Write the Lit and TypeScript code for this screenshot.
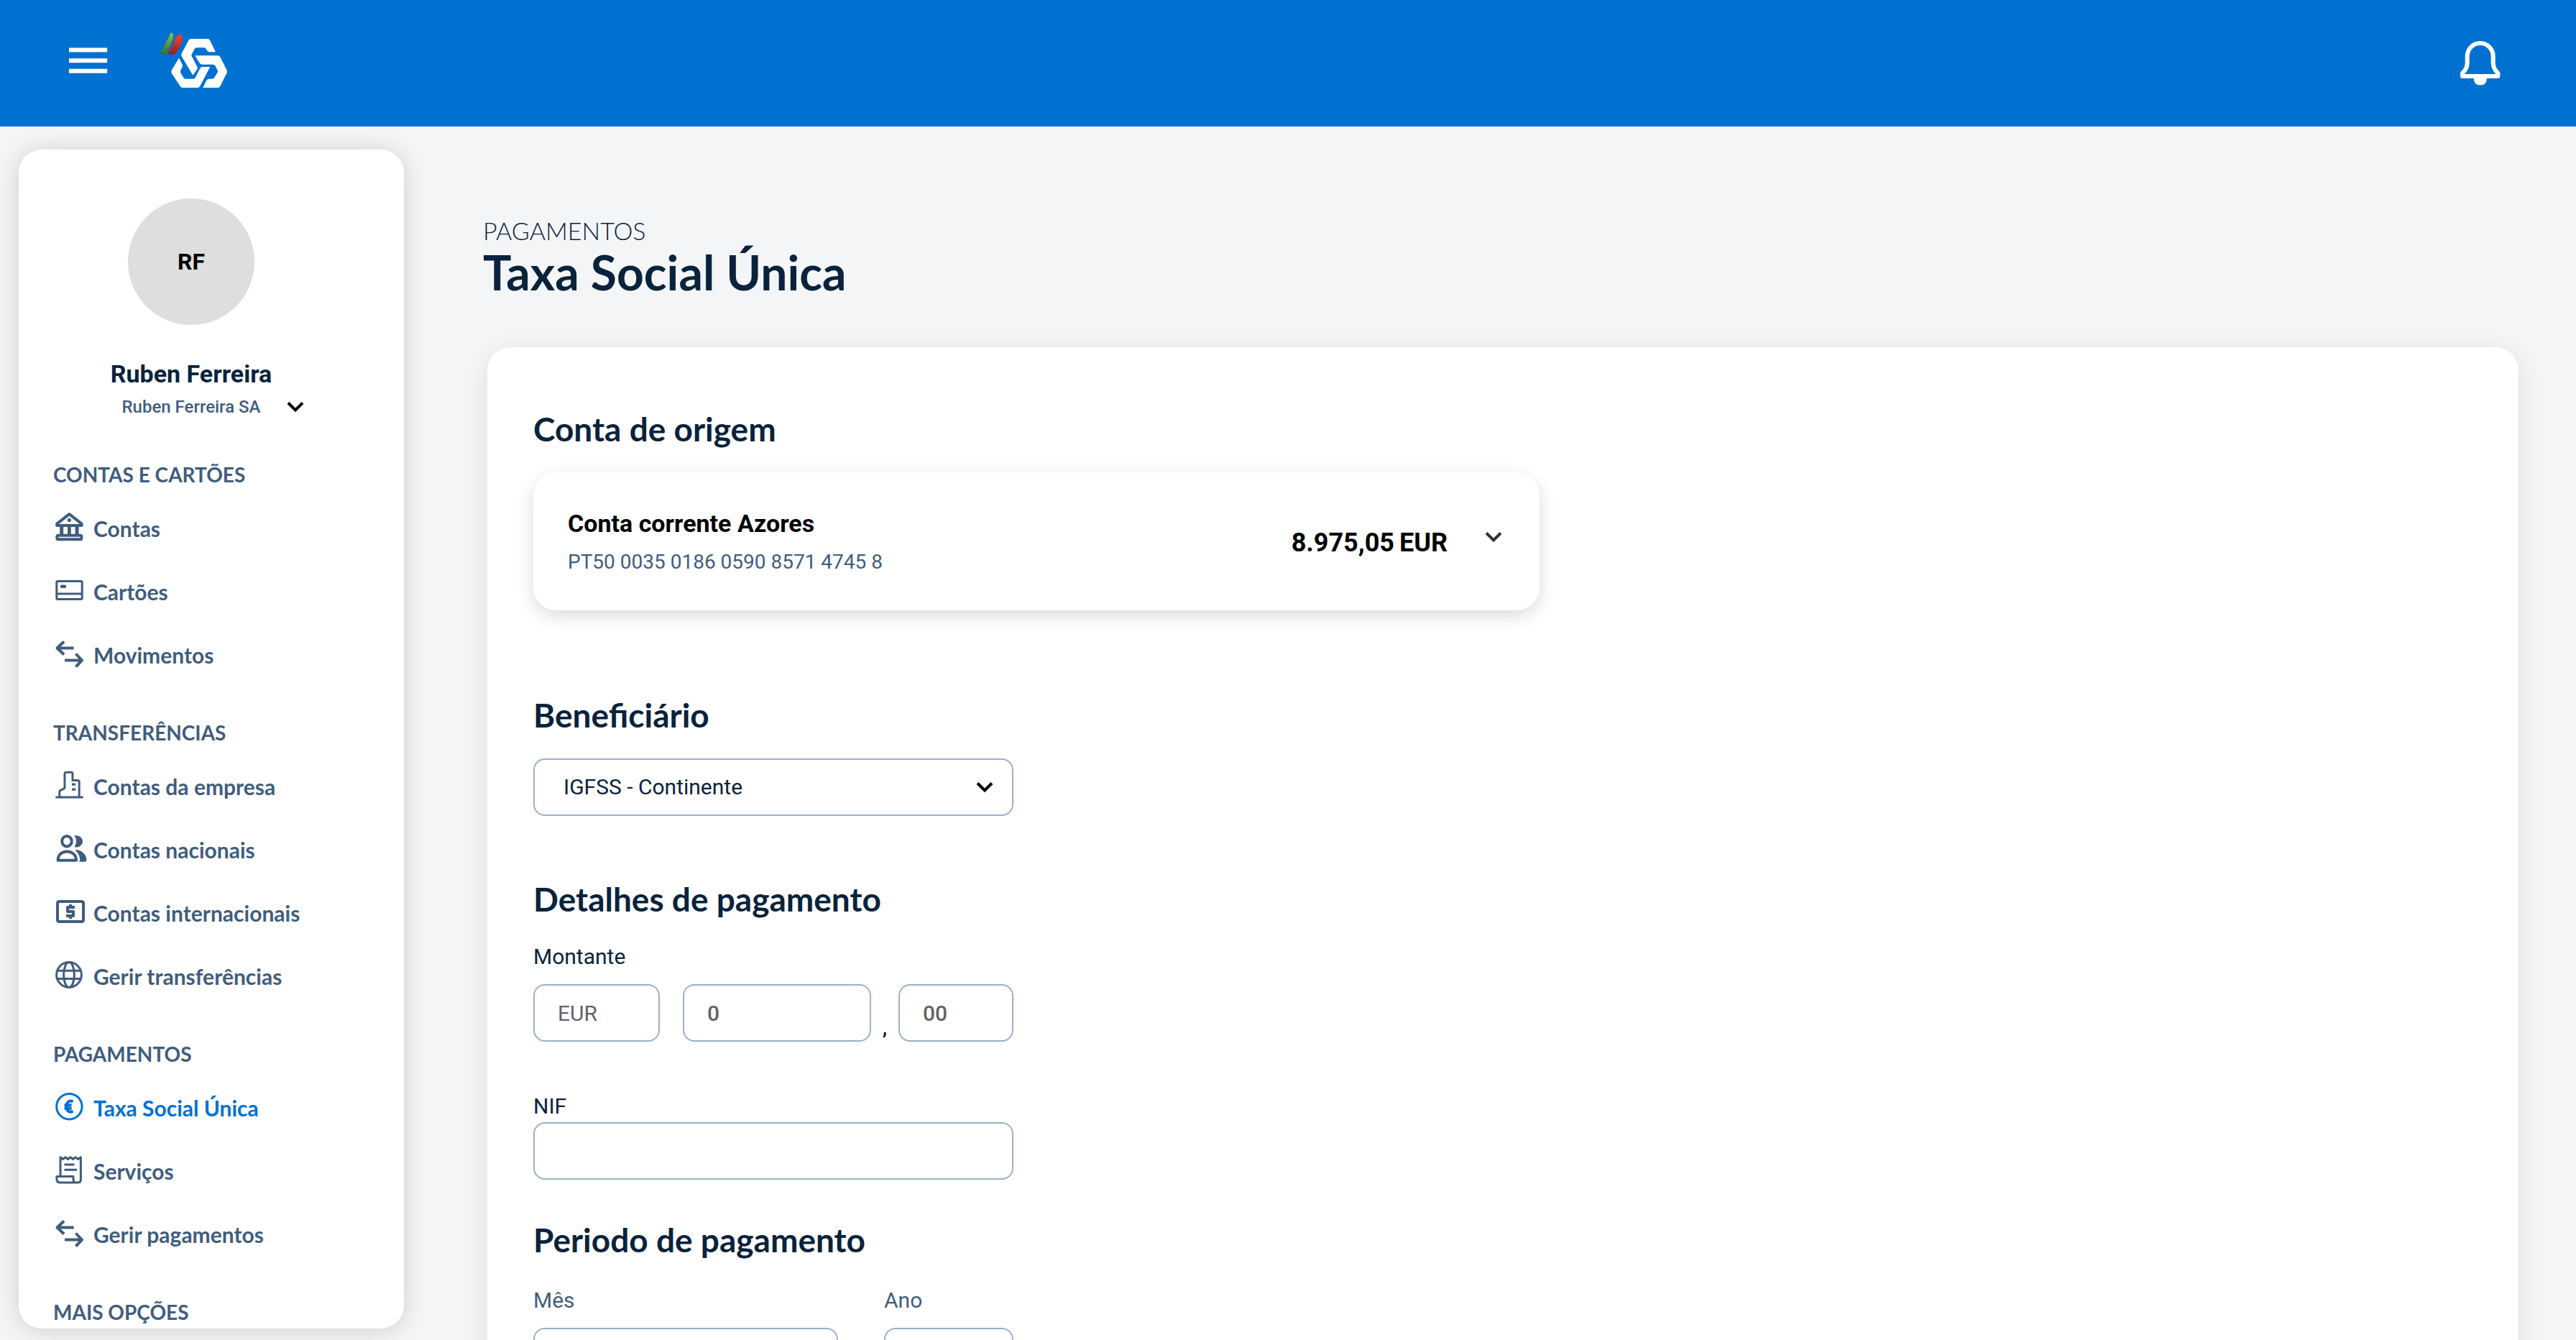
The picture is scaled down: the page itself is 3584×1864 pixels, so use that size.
import { LitElement, html, svg, css, type TemplateResult } from "lit";
import { customElement, property } from "lit/decorators.js";

const arrows = svg`
  <g class="line">
    <path d="M28.6 14.5H5M15 5.5L5.5 14.5L15 23.5" />
    <path d="M16 31.6H39.5M31.5 22.5L40 31.6L31.5 40.5" />
  </g>`;

const icons: Record<string, TemplateResult> = {
  bank: svg`
    <path class="line" d="M22.4 4.2L39.6 17.6V20H5.2V17.6Z" />
    <circle class="fill" cx="22.4" cy="12.6" r="2.6" />
    <path class="fill" d="M9.2 20h5v13h-5zM20 20h4.8v13H20zM30.6 20h5v13h-5z" />
    <rect class="line" x="5.4" y="33.8" width="34" height="5.4" rx="1.5" />`,
  card: svg`
    <rect class="line thin" x="4.8" y="9.6" width="35.4" height="25" rx="1.5" />
    <path class="line thin" d="M5 27H40" />
    <rect class="fill" x="9.8" y="14.4" width="8.4" height="4.6" rx="2.2" />`,
  arrows,
  building: svg`
    <path class="line thin" d="M3.3 39H41.8" />
    <path class="line thin" d="M8.8 39V32Q8.8 29.6 11 28.8L14 27.6Q16 27 16 25V6.6Q16 4.2 18.4 4.2H25Q27 4.2 27 6.2V15.4H33.6Q36.2 15.4 36.2 18V39" />
    <path class="fill" d="M26 19.4h5.2v3.4H26zM26 26.4h5.2v3.4H26z" />`,
  people: svg`
    <ellipse class="line" cx="19" cy="12.3" rx="6.8" ry="7.2" />
    <path class="fill" d="M29.4 4.6C35 3 41 7 41 12.4S35 21.8 29.4 20.2C33 15.6 33 9.2 29.4 4.6Z" />
    <path class="line" d="M6.6 38.8C6.6 31 12 26.4 19.2 26.4S32 31 32 38.8Z" />
    <path class="fill" d="M30 24.2C39 23.4 46.4 30 46.4 38.4Q46.4 40.7 44 40.7H36Q37.4 40 37.2 37.6C36.8 31.8 34 27.4 30 24.2Z" />`,
  cash: svg`
    <path class="fill" transform="translate(0 -2) scale(2)" d="M11 17h2v-1h1c.55 0 1-.45 1-1v-3c0-.55-.45-1-1-1h-3v-1h4V8h-2V7h-2v1h-1c-.55 0-1 .45-1 1v3c0 .55.45 1 1 1h3v1H9v2h2v1zm9-13H4c-1.11 0-1.99.89-1.99 2L2 18c0 1.11.89 2 2 2h16c1.11 0 2-.89 2-2V6c0-1.11-.89-2-2-2zm0 14H4V6h16v12z" />`,
  globe: svg`
    <g class="line thin">
      <circle cx="22" cy="22" r="17.4" />
      <ellipse cx="22" cy="22" rx="7.4" ry="17.4" />
      <path d="M5.5 16.2H38.5M5.5 27.6H38.5" />
    </g>`,
  euro: svg`
    <circle class="line thin" cx="22.4" cy="22.2" r="17.7" />
    <path class="line" d="M27.6 15.4C21.5 12.8 18.6 17 18.6 22.2S21.5 31.4 27.6 28.8M15.6 20.2H25.6M15.6 24.8H25.6" />`,
  receipt: svg`
    <path class="line thin" d="M10 31V4.8L13.5 7.5L17 4.8L20.5 7.5L24 4.8L27.5 7.5L31 4.8L34.5 7.5L38.4 4.8V36Q38.4 40 34 40H10Q4.9 40 4.9 35.5V31.5H28V36Q28 40 32.5 40" />
    <path class="line thin" d="M15.5 15H29.5M15.5 22.3H33" />`,
};

interface NavItem {
  icon: string;
  label: string;
  active?: boolean;
}

const groups: { title: string; items: NavItem[] }[] = [
  {
    title: "CONTAS E CARTÕES",
    items: [
      { icon: "bank", label: "Contas" },
      { icon: "card", label: "Cartões" },
      { icon: "arrows", label: "Movimentos" },
    ],
  },
  {
    title: "TRANSFERÊNCIAS",
    items: [
      { icon: "building", label: "Contas da empresa" },
      { icon: "people", label: "Contas nacionais" },
      { icon: "cash", label: "Contas internacionais" },
      { icon: "globe", label: "Gerir transferências" },
    ],
  },
  {
    title: "PAGAMENTOS",
    items: [
      { icon: "euro", label: "Taxa Social Única", active: true },
      { icon: "receipt", label: "Serviços" },
      { icon: "arrows", label: "Gerir pagamentos" },
    ],
  },
  { title: "MAIS OPÇÕES", items: [] },
];

const chevron = html`<svg class="chevron" viewBox="0 0 24 16" aria-hidden="true">
  <path d="M2 2.5L12 12.5L22 2.5" />
</svg>`;

@customElement("app-header")
export class AppHeader extends LitElement {
  static styles = css`
    :host {
      display: flex;
      align-items: center;
      box-sizing: border-box;
      height: 176px;
      padding: 0 96px 8px 88px;
      background: #0071d0;
    }
    .action {
      display: block;
      width: 72px;
      height: 72px;
      padding: 0;
      border: 0;
      background: none;
      cursor: pointer;
    }
    .icon {
      display: block;
      width: 72px;
      height: 72px;
    }
    .home {
      margin-left: 50px;
      margin-right: auto;
    }
    .logo {
      display: block;
      width: 120px;
      height: 94px;
    }
  `;

  render() {
    return html`
      <button class="action" aria-label="Menu">
        <svg class="icon" viewBox="0 0 72 72" fill="#fff">
          <path d="M8 18.4h53.2v6H8zM8 33.2h53.2v6H8zM8 47.8h53.2v6H8z" />
        </svg>
      </button>
      <a class="home" href="#" aria-label="Início">
        <svg class="logo" viewBox="0 0 360 282">
          <defs>
            <linearGradient id="green" x1="0" y1="0" x2="0" y2="1">
              <stop offset="0" stop-color="#8cc63f" />
              <stop offset="1" stop-color="#2c6e2f" />
            </linearGradient>
            <linearGradient id="red" x1="0" y1="0" x2="0" y2="1">
              <stop offset="0.2" stop-color="#e23d31" />
              <stop offset="1" stop-color="#8c1f1f" />
            </linearGradient>
          </defs>
          <path fill="url(#green)" d="M85 25L91 28L93 40L91 54L80 78L69 106L62 115L52 117L43 115L41 107L53 86L66 60L75 44L80 30Z" />
          <path fill="url(#red)" d="M112 35L129 33L130 42L132 52L126 74L113 97L103 112L92 117L72 115L74 106L88 82L98 62L97 54L106 46L107 38Z" />
          <g fill="#fff">
            <path d="M168 51H237Q243 51 246 57L270 106H245Q238 106 234 100L230 93Q227 88 222 88H190Q185 88 182 93L171 114Q168 120 171 125L193 167Q196 173 193 178L175 203L128 124Q125 118 128 112L158 56Q161 51 168 51Z" />
            <path d="M184 121H279Q286 121 289 127L317 182Q319 188 317 193L289 249Q286 255 280 255H217L231 226Q235 218 242 218H256Q262 218 265 212L278 191Q280 187 278 183L268 163Q265 158 259 158H215Q207 158 203 152Z" />
            <path d="M117 131L131 158Q133 163 131 168L124 182Q122 188 124 193L136 213Q139 218 144 218H177Q182 218 185 213L205 175Q208 168 215 168H247L205 248Q201 255 195 255H132Q126 255 122 249L86 194Q84 188 86 182Z" />
          </g>
        </svg>
      </a>
      <button class="action" aria-label="Notificações">
        <svg class="icon" viewBox="0 0 72 72">
          <path fill="none" stroke="#fff" stroke-width="6" stroke-linejoin="round"
            d="M16.7 30.2a18 18.1 0 0 1 36 0V39q0 9 6.7 14.6V58H10V53.6q6.7-5.6 6.7-14.6Z" />
          <path fill="#fff" d="M25.7 60H44q0 10.6-9.2 10.6T25.7 60Z" />
        </svg>
      </button>
    `;
  }
}

@customElement("app-sidebar")
export class AppSidebar extends LitElement {
  static styles = css`
    :host {
      display: block;
      box-sizing: border-box;
      flex: 0 0 536px;
      overflow: hidden;
      padding: 68px 0 0 48px;
      border-radius: 32px;
      background: #fff;
      box-shadow: 0 2px 32px rgba(0, 0, 0, 0.16);
      font-family: Lato, sans-serif;
      color: #3f5d7d;
    }
    .profile {
      display: flex;
      flex-direction: column;
      align-items: center;
      margin: 0 56px 54px -48px;
      font-family: Roboto, sans-serif;
    }
    .avatar {
      display: grid;
      place-items: center;
      width: 176px;
      height: 176px;
      margin-bottom: 48px;
      border-radius: 50%;
      background: #dedede;
      color: #000;
      font-size: 32px;
      font-weight: 700;
    }
    .name {
      margin-bottom: 6px;
      font-size: 34px;
      font-weight: 700;
      line-height: 40px;
      color: #0a233c;
    }
    .company {
      display: grid;
      grid-template-columns: 1fr auto 1fr;
      align-items: center;
      width: 100%;
      padding: 0;
      border: 0;
      background: none;
      color: inherit;
      font: 500 24px/40px Roboto, sans-serif;
      cursor: pointer;
    }
    .company-name {
      grid-column: 2;
    }
    .chevron {
      width: 24px;
      height: 16px;
      margin-left: 36px;
      fill: none;
      stroke: #000;
      stroke-width: 4;
    }
    .title {
      margin: 0 0 11px;
      font-size: 28px;
      font-weight: 700;
      line-height: 40px;
    }
    .list {
      margin: 0 0 44px;
      padding: 0;
      list-style: none;
    }
    .item {
      display: flex;
      align-items: center;
      gap: 8px;
      height: 88px;
      color: inherit;
      font-size: 30px;
      font-weight: 700;
      text-decoration: none;
    }
    .active {
      color: #0071d0;
    }
    .icon {
      flex: none;
      width: 48px;
      height: 48px;
    }
    .line {
      fill: none;
      stroke: currentColor;
      stroke-width: 4;
      stroke-linejoin: round;
    }
    .thin {
      stroke-width: 3;
    }
    .fill {
      fill: currentColor;
    }
  `;

  render() {
    return html`
      <div class="profile">
        <div class="avatar">RF</div>
        <div class="name">Ruben Ferreira</div>
        <button class="company">
          <span class="company-name">Ruben Ferreira SA</span>
          ${chevron}
        </button>
      </div>
      <nav>
        ${groups.map(
          (group) => html`
            <h2 class="title">${group.title}</h2>
            <ul class="list">
              ${group.items.map(
                (item) => html`<li>
                  <a class="item ${item.active ? "active" : ""}" href="#">
                    <svg class="icon" viewBox="0 0 48 48" aria-hidden="true">${icons[item.icon]}</svg>
                    <span>${item.label}</span>
                  </a>
                </li>`,
              )}
            </ul>
          `,
        )}
      </nav>
    `;
  }
}

@customElement("payment-form")
export class PaymentForm extends LitElement {
  @property() account = "Conta corrente Azores";

  static styles = css`
    :host {
      display: block;
      padding: 86px 64px;
      border-radius: 32px;
      background: #fff;
      box-shadow: 0 8px 32px rgba(0, 0, 0, 0.1);
      font-family: Roboto, sans-serif;
      color: #0a233c;
    }
    .heading {
      margin: 0 0 32px;
      font: 700 46px/56px Lato, sans-serif;
    }
    .account {
      display: flex;
      align-items: center;
      box-sizing: border-box;
      width: 100%;
      max-width: 1400px;
      height: 192px;
      margin-bottom: 118px;
      padding: 4px 52px 0 48px;
      border: 0;
      border-radius: 32px;
      background: #fff;
      box-shadow: 0 8px 24px rgba(0, 0, 0, 0.14);
      color: #000;
      font-family: inherit;
      text-align: left;
      cursor: pointer;
    }
    .details {
      display: grid;
      gap: 14px;
      margin-right: auto;
    }
    .account-name {
      font-size: 34px;
      font-weight: 700;
      line-height: 40px;
    }
    .iban {
      color: #3f5d7d;
      font-size: 28px;
      line-height: 40px;
    }
    .balance {
      display: flex;
      gap: 7px;
      margin-right: 52px;
      font-size: 36px;
      font-weight: 700;
    }
    .chevron {
      width: 24px;
      height: 16px;
      fill: none;
      stroke: #000;
      stroke-width: 4;
    }
    .account .chevron {
      margin-bottom: 16px;
      stroke: #333;
    }
    .fields {
      max-width: 668px;
    }
    .box {
      box-sizing: border-box;
      width: 100%;
      height: 80px;
      margin: 0;
      padding: 0 32px;
      border: 2px solid #9ab0cc;
      border-radius: 16px;
      background: #fff;
      color: inherit;
      font: 400 30px/40px Roboto, sans-serif;
    }
    .box::placeholder {
      color: #636363;
      opacity: 1;
    }
    .strong::placeholder {
      font-weight: 500;
    }
    .select {
      display: grid;
      align-items: center;
      margin-bottom: 88px;
    }
    .select > * {
      grid-area: 1 / 1;
    }
    .select .box {
      padding: 0 40px;
      appearance: none;
    }
    .select .chevron {
      justify-self: end;
      margin-right: 28px;
      pointer-events: none;
    }
    .label {
      display: block;
      margin-bottom: 18px;
      font-size: 30px;
      line-height: 40px;
    }
    .amount {
      display: flex;
      align-items: flex-end;
      margin-bottom: 70px;
    }
    .currency {
      flex: 0 0 176px;
      margin-right: 32px;
    }
    .euros {
      flex: 1;
      min-width: 0;
    }
    .cents {
      flex: 0 0 160px;
    }
    .comma {
      flex: 0 0 38px;
      color: #000;
      font-size: 30px;
      line-height: 40px;
      text-align: center;
    }
    .tight {
      margin-bottom: 2px;
    }
    .nif {
      display: block;
      margin-bottom: 56px;
    }
    .period {
      display: grid;
      grid-template-columns: 1fr 180px;
      gap: 64px;
      padding-top: 4px;
      color: #3f5d7d;
    }
  `;

  render() {
    return html`
      <h2 class="heading">Conta de origem</h2>
      <button class="account">
        <span class="details">
          <span class="account-name">${this.account}</span>
          <span class="iban">PT50 0035 0186 0590 8571 4745 8</span>
        </span>
        <span class="balance"><span>8.975,05</span><span>EUR</span></span>
        ${chevron}
      </button>
      <form class="fields">
        <h2 class="heading" id="beneficiary">Beneficiário</h2>
        <div class="select">
          <select class="box" aria-labelledby="beneficiary">
            <option>IGFSS - Continente</option>
          </select>
          ${chevron}
        </div>
        <h2 class="heading">Detalhes de pagamento</h2>
        <label class="label" for="euros">Montante</label>
        <div class="amount">
          <input class="box currency" aria-label="Moeda" placeholder="EUR" />
          <input class="box euros strong" id="euros" placeholder="0" />
          <span class="comma">,</span>
          <input class="box cents strong" aria-label="Cêntimos" placeholder="00" />
        </div>
        <label class="label tight" for="nif">NIF</label>
        <input class="box nif" id="nif" />
        <h2 class="heading">Periodo de pagamento</h2>
        <div class="period">
          <div>
            <label class="label" for="month">Mês</label>
            <input class="box" id="month" />
          </div>
          <div>
            <label class="label" for="year">Ano</label>
            <input class="box" id="year" />
          </div>
        </div>
      </form>
    `;
  }
}

@customElement("app-root")
export class AppRoot extends LitElement {
  static styles = css`
    :host {
      display: flex;
      flex-direction: column;
      height: 100vh;
      overflow: hidden;
      background: #f4f5f7;
    }
    .header {
      flex: none;
    }
    .body {
      display: flex;
      flex: 1;
      min-height: 0;
    }
    .sidebar {
      margin: 32px 0 16px 26px;
    }
    .main {
      flex: 1;
      min-width: 0;
      padding: 125px 80px 0 110px;
      font-family: Lato, sans-serif;
      color: #0a233c;
    }
    .crumb {
      margin: 0 0 6px;
      font-size: 34px;
      font-weight: 300;
      line-height: 40px;
    }
    .title {
      margin: 0 0 72px;
      font-size: 66px;
      font-weight: 700;
      line-height: 64px;
    }
    .form {
      margin-left: 6px;
    }
  `;

  render() {
    return html`
      <app-header class="header"></app-header>
      <div class="body">
        <app-sidebar class="sidebar"></app-sidebar>
        <main class="main">
          <p class="crumb">PAGAMENTOS</p>
          <h1 class="title">Taxa Social Única</h1>
          <payment-form class="form"></payment-form>
        </main>
      </div>
    `;
  }
}
